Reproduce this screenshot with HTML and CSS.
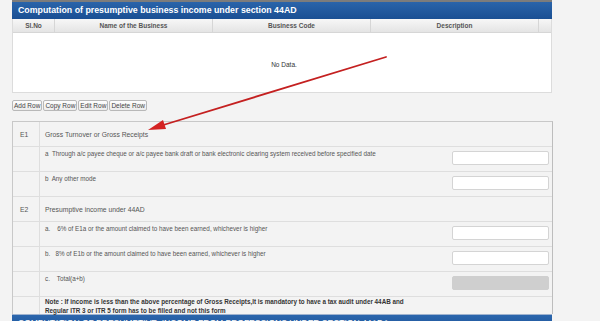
FILE: index.html
```html
<!DOCTYPE html>
<html>
<head>
<meta charset="utf-8">
<link rel="stylesheet" href="styles.css">
</head>
<body>
<div class="page">
  <div class="topstrip"></div>
  <div class="panel">
    <div class="title">Computation of presumptive business income under section 44AD</div>
    <div class="grid">
      <div class="ghead">
        <div class="c1">Sl.No</div>
        <div class="c2">Name of the Business</div>
        <div class="c3">Business Code</div>
        <div class="c4">Description</div>
        <div class="c5"></div>
      </div>
      <div class="gbody">No Data.</div>
    </div>
  </div>
  <div class="buttons">
    <button class="btn">Add Row</button><button class="btn">Copy Row</button><button class="btn">Edit Row</button><button class="btn">Delete Row</button>
  </div>
  <div class="section">
    <div class="row main"><div class="lab">E1</div><div class="txt">Gross Turnover or Gross Receipts</div></div>
    <div class="row sub"><div class="lab"></div><div class="txt">a&nbsp; Through a/c payee cheque or a/c payee bank draft or bank electronic clearing system received before specified date</div><input class="inp" type="text"></div>
    <div class="row sub"><div class="lab"></div><div class="txt">b&nbsp; Any other mode</div><input class="inp" type="text"></div>
    <div class="row main"><div class="lab">E2</div><div class="txt">Presumptive income under 44AD</div></div>
    <div class="row sub"><div class="lab"></div><div class="txt">a.&nbsp;&nbsp;&nbsp; 6% of E1a or the amount claimed to have been earned, whichever is higher</div><input class="inp" type="text"></div>
    <div class="row sub"><div class="lab"></div><div class="txt">b.&nbsp;&nbsp; 8% of E1b or the amount claimed to have been earned, whichever is higher</div><input class="inp" type="text"></div>
    <div class="row sub"><div class="lab"></div><div class="txt">c.&nbsp;&nbsp;&nbsp; Total(a+b)</div><input class="inp dis" type="text" disabled></div>
    <div class="row note"><div class="lab"></div><div class="txt">Note : If income is less than the above percentage of Gross Receipts,It is mandatory to have a tax audit under 44AB and<br>Regular ITR 3 or ITR 5 form has to be filled and not this form</div></div>
  </div>
  <div class="title2">COMPUTATION OF PRESUMPTIVE&nbsp; INCOME FROM PROFESSIONS UNDER SECTION 44ADA</div>
  <svg class="arrow" width="600" height="321" viewBox="0 0 600 321">
    <line x1="386" y1="57" x2="160" y2="126" stroke="#c42020" stroke-width="1.8" stroke-linecap="round"/>
    <polygon points="148,130 163,120 166,129" fill="#d42222"/>
  </svg>
</div>
</body>
</html>
```

FILE: styles.css
```css
html, body {
  margin: 0;
  padding: 0;
  background: #f3f3f3;
  font-family: "Liberation Sans", Arial, sans-serif;
}
.page {
  position: relative;
  width: 600px;
  height: 321px;
  overflow: hidden;
}
.topstrip {
  margin-left: 12px;
  width: 540px;
  height: 2px;
  background: #7c7c7c;
}
.panel {
  margin-left: 12px;
  width: 540px;
}
.title {
  height: 17px;
  line-height: 17px;
  background: linear-gradient(#2a64aa, #1a4f93);
  color: #fff;
  font-weight: bold;
  font-size: 8.8px;
  padding-left: 6px;
}
.grid {
  background: #fff;
  border: 1px solid #dcdcdc;
  border-top: none;
}
.ghead {
  display: flex;
  height: 13px;
  line-height: 13px;
  background: linear-gradient(#f7f7f7, #e4e4e4);
  border-bottom: 1px solid #d6d6d6;
  font-size: 6.5px;
  font-weight: bold;
  color: #555;
}
.ghead > div {
  text-align: center;
  border-right: 1px solid #d6d6d6;
}
.c1 { width: 41px; }
.c2 { width: 157px; }
.c3 { width: 157px; }
.c4 { width: 167px; }
.c5 { flex: 1; border-right: none !important; }
.gbody {
  height: 59px;
  display: flex;
  align-items: center;
  justify-content: center;
  font-size: 6.5px;
  color: #333;
  padding-left: 4px;
  padding-top: 3px;
  box-sizing: border-box;
}
.buttons {
  margin: 7px 0 0 12px;
  display: flex;
  gap: 1px;
}
.btn {
  font-family: "Liberation Sans", Arial, sans-serif;
  font-size: 6.5px;
  color: #444;
  height: 11px;
  padding: 0 1px;
  background: linear-gradient(#fdfdfd, #ececec);
  border: 1px solid #b8b8b8;
  border-radius: 2px;
  line-height: 9px;
}
.section {
  margin: 10px 0 0 12px;
  width: 539px;
  border: 1px solid #c8c8c8;
  border-right: 1px solid #bdbdbd;
  border-bottom: none;
  background: #f3f3f3;
}
.row {
  display: flex;
  height: 24px;
  border-bottom: 1px solid #dedede;
  font-size: 6.3px;
  color: #555;
}
.row:last-child { border-bottom: none; }
.lab {
  width: 27px;
  flex: none;
  border-right: 1px solid #dedede;
  padding-left: 7px;
  box-sizing: border-box;
}
.main { align-items: center; font-size: 6.8px; }
.main .lab { align-self: stretch; display: flex; align-items: center; }
.sub .txt { padding-top: 3px; }
.txt {
  flex: 1;
  padding-left: 5px;
}
.inp {
  width: 97px;
  height: 14px;
  box-sizing: border-box;
  margin: 4px 3px 0 0;
  border: 1px solid #d4d4d4;
  border-radius: 2px;
  background: #fff;
  padding: 0;
  flex: none;
}
.inp.dis {
  background: #cfcfcf;
  border-color: #cfcfcf;
}
.note { height: 17px; }
.note .txt {
  font-weight: bold;
  color: #333;
  font-size: 6.3px;
  line-height: 9px;
  padding-top: 0;
}
.title2 {
  margin: 0 0 0 12px;
  width: 534px;
  height: 17px;
  background: linear-gradient(#2b66ad, #1a4f93);
  color: #fff;
  font-size: 8.5px;
  line-height: 12px;
  padding-left: 6px;
  padding-top: 2px;
  border-top: 1px solid #9fb3cf;
}
.arrow {
  position: absolute;
  left: 0;
  top: 0;
  pointer-events: none;
}
```
